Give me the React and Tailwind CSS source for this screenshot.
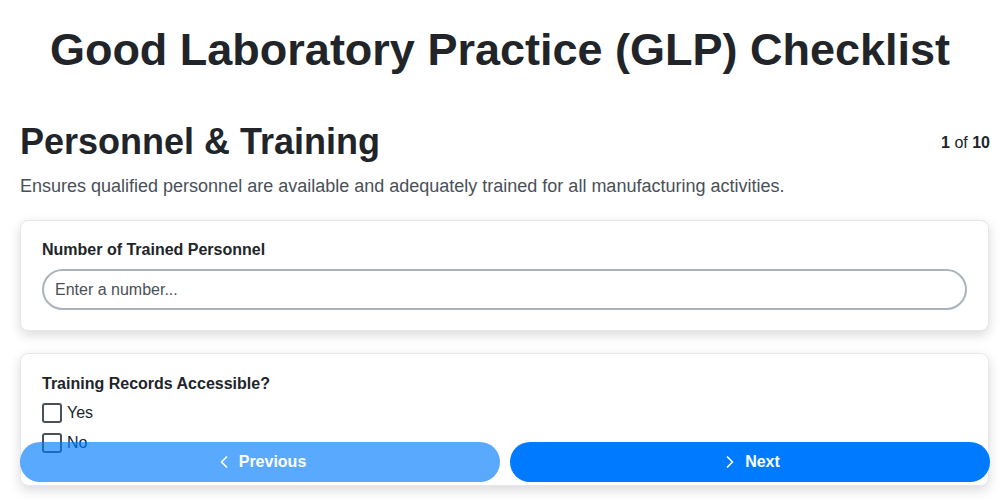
import { useState } from 'react';
import { ChevronLeft, ChevronRight } from 'lucide-react';

export default function App() {
  const [count, setCount] = useState('');
  const [accessible, setAccessible] = useState({ yes: false, no: false });

  return (
    <div className="h-screen overflow-hidden bg-white font-['Liberation_Sans',Arial,sans-serif] text-[#212529]">
      <h1 className="pt-[22px] text-center text-[45px] font-bold leading-[56px]">Good Laboratory Practice (GLP) Checklist</h1>

      <div className="pb-24 pl-5 pr-[10px]">
        <div className="mt-[42px] flex items-start justify-between">
          <h2 className="text-[36px] font-bold leading-[44px]">Personnel &amp; Training</h2>
          <div className="pt-[11px] text-base">
            <span className="font-bold">1</span> of <span className="font-bold">10</span>
          </div>
        </div>
        <p className="mt-[10px] text-[18px] leading-[24px] text-[#495057]">
          Ensures qualified personnel are available and adequately trained for all manufacturing activities.
        </p>

        <div className="mt-[22px] space-y-[22px] pr-[1px]">
          <div className="rounded-lg border border-[#e5e7eb] bg-white px-[21px] pb-5 pt-5 shadow-[0_4px_12px_rgba(0,0,0,0.15)]">
            <label htmlFor="trained" className="block text-base font-bold leading-[18px]">Number of Trained Personnel</label>
            <input
              id="trained"
              type="number"
              value={count}
              onChange={(e) => setCount(e.target.value)}
              placeholder="Enter a number..."
              className="mt-[10px] block h-[41px] w-full rounded-full border-2 border-[#aab2ba] px-[11px] text-base placeholder:text-[#495057] focus:outline-none"
            />
          </div>

          <div className="rounded-lg border border-[#e5e7eb] bg-white px-[21px] pb-[32px] pt-[21px] shadow-[0_4px_12px_rgba(0,0,0,0.15)]">
            <p className="text-base font-bold leading-[18px]">Training Records Accessible?</p>
            <div className="mt-[10px] space-y-[10px]">
              {[['yes', 'Yes'], ['no', 'No']].map(([key, text]) => (
                <label key={key} className="flex items-center gap-[5px] text-base leading-5">
                  <input
                    type="checkbox"
                    checked={accessible[key]}
                    onChange={(e) => setAccessible({ ...accessible, [key]: e.target.checked })}
                    className="h-5 w-5 appearance-none rounded-[3px] border-2 border-[#495057] bg-white"
                  />
                  {text}
                </label>
              ))}
            </div>
          </div>
        </div>
      </div>

      <div className="fixed inset-x-0 bottom-[18px] flex gap-[10px] pl-5 pr-[10px]">
        <button
          type="button"
          disabled
          className="flex h-10 flex-1 items-center justify-center gap-[5px] rounded-full bg-[#007bff] text-base font-bold text-white opacity-[0.65]"
        >
          <ChevronLeft className="h-5 w-5" strokeWidth={2} />
          Previous
        </button>
        <button
          type="button"
          className="flex h-10 flex-1 items-center justify-center gap-[5px] rounded-full bg-[#007bff] text-base font-bold text-white"
        >
          <ChevronRight className="h-5 w-5" strokeWidth={2} />
          Next
        </button>
      </div>
    </div>
  );
}
